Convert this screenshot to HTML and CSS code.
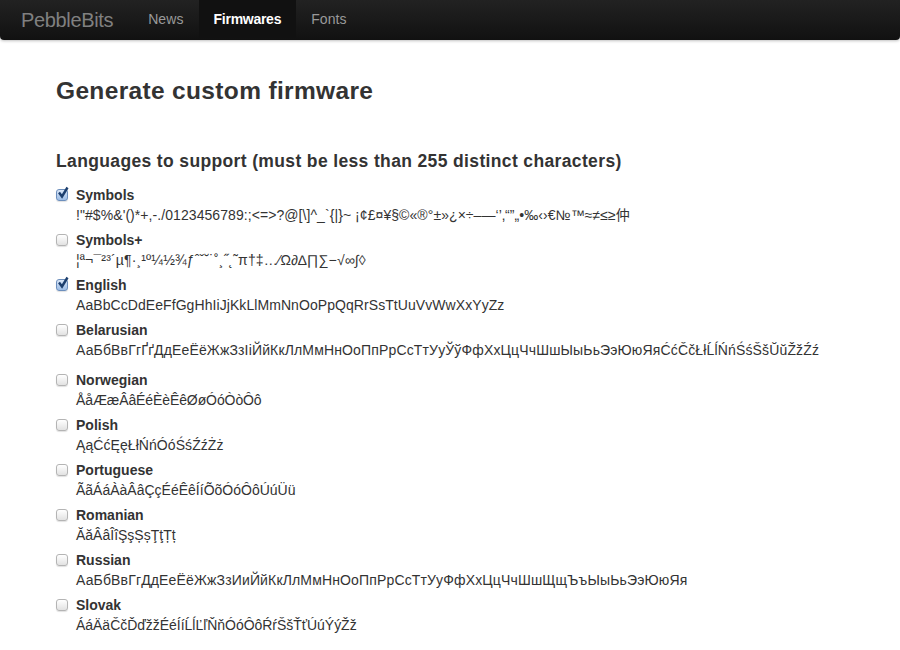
FILE: index.html
```html
<!DOCTYPE html>
<html lang="en">
<head>
    <meta charset="UTF-8">
    <meta name="viewport" content="width=device-width, initial-scale=1.0">
    <title>PebbleBits - Firmwares</title>
    <link rel="stylesheet" href="styles.css">
</head>
<body>
    <div class="navbar">
        <a class="brand" href="#">PebbleBits</a>
        <ul class="nav">
            <li><a href="#">News</a></li>
            <li class="active"><a href="#">Firmwares</a></li>
            <li><a href="#">Fonts</a></li>
        </ul>
    </div>

    <div class="container">
        <h1>Generate custom firmware</h1>
        <h3>Languages to support (must be less than 255 distinct characters)</h3>

        <div class="lang">
            <label class="check">
                <input type="checkbox" checked>
                <svg class="tick" width="14" height="14" viewBox="0 0 14 14"><path d="M3 6.5 L6 10.5 L11.5 1.5" fill="none" stroke="#1d3f6e" stroke-width="2.4"/></svg>
                Symbols
            </label>
            <p class="chars">!"#$%&amp;'()*+,-./0123456789:;&lt;=&gt;?@[\]^_`{|}~ ¡¢£¤¥§©«®°±»¿×÷–—‘’‚“”„•‰‹›€№™≈≠≤≥仲</p>
        </div>
        <div class="lang">
            <label class="check"><input type="checkbox"> Symbols+</label>
            <p class="chars wide">¦ª¬¯²³´µ¶·¸¹º¼½¾ƒˆˇ˘˙˚¸˝˛˜π†‡…⁄Ω∂∆∏∑−√∞∫◊</p>
        </div>
        <div class="lang">
            <label class="check">
                <input type="checkbox" checked>
                <svg class="tick" width="14" height="14" viewBox="0 0 14 14"><path d="M3 6.5 L6 10.5 L11.5 1.5" fill="none" stroke="#1d3f6e" stroke-width="2.4"/></svg>
                English
            </label>
            <p class="chars">AaBbCcDdEeFfGgHhIiJjKkLlMmNnOoPpQqRrSsTtUuVvWwXxYyZz</p>
        </div>
        <div class="lang tall">
            <label class="check"><input type="checkbox"> Belarusian</label>
            <p class="chars wide">АаБбВвГгҐґДдЕеЁёЖжЗзІіЙйКкЛлМмНнОоПпРрСсТтУуЎўФфХхЦцЧчШшЫыЬьЭэЮюЯяĆćČčŁłĹĺŃńŚśŠšŬŭŽžŹź</p>
        </div>
        <div class="lang">
            <label class="check"><input type="checkbox"> Norwegian</label>
            <p class="chars narrow">ÅåÆæÂâÉéÈèÊêØøÓóÒòÔô</p>
        </div>
        <div class="lang">
            <label class="check"><input type="checkbox"> Polish</label>
            <p class="chars">ĄąĆćĘęŁłŃńÓóŚśŹźŻż</p>
        </div>
        <div class="lang">
            <label class="check"><input type="checkbox"> Portuguese</label>
            <p class="chars plain">ÃãÁáÀàÂâÇçÉéÊêÍíÕõÓóÔôÚúÜü</p>
        </div>
        <div class="lang">
            <label class="check"><input type="checkbox"> Romanian</label>
            <p class="chars plain">ĂăÂâÎîŞşȘșŢţȚț</p>
        </div>
        <div class="lang">
            <label class="check"><input type="checkbox"> Russian</label>
            <p class="chars wide">АаБбВвГгДдЕеЁёЖжЗзИиЙйКкЛлМмНнОоПпРрСсТтУуФфХхЦцЧчШшЩщЪъЫыЬьЭэЮюЯя</p>
        </div>
        <div class="lang">
            <label class="check"><input type="checkbox"> Slovak</label>
            <p class="chars slim">ÁáÄäČčĎďžžÉéÍíĹĺĽľŇňÓóÔôŔŕŠšŤťÚúÝýŽž</p>
        </div>
    </div>
</body>
</html>
```

FILE: styles.css
```css
body {
    margin: 0;
    font-family: "Liberation Sans", Arial, sans-serif;
    font-size: 14px;
    line-height: 20px;
    color: #333;
    background: #fff;
    overflow: hidden;
}
.navbar {
    display: flex;
    height: 40px;
    background: linear-gradient(to bottom, #222, #111);
    border-radius: 0 0 4px 4px;
    box-shadow: 0 1px 3px rgba(0, 0, 0, 0.25);
}
.brand {
    padding: 0 20px 0 21px;
    font-size: 20px;
    line-height: 40px;
    font-weight: normal;
    color: #808080;
    text-decoration: none;
    letter-spacing: -0.35px;
}
.nav {
    display: flex;
    list-style: none;
    margin: 0;
    padding: 0;
}
.nav a {
    display: block;
    padding: 0 15px;
    line-height: 38px;
    color: #999;
    font-weight: normal;
    text-decoration: none;
    letter-spacing: 0.1px;
}
.nav .active a {
    background: #111;
    color: #fff;
    font-weight: bold;
    letter-spacing: -0.27px;
}
.container {
    padding: 0 56px;
}
h1 {
    margin: 33px 0 0;
    font-size: 24.5px;
    line-height: 36px;
    font-weight: bold;
    letter-spacing: 0.34px;
}
h3 {
    margin: 38px 0 10px;
    font-size: 17.5px;
    line-height: 28px;
    font-weight: bold;
    letter-spacing: 0.36px;
}
.lang {
    margin-bottom: 5px;
}
.lang.tall {
    margin-bottom: 10px;
}
.check {
    position: relative;
    display: flex;
    align-items: center;
    gap: 7px;
    font-weight: bold;
    height: 20px;
}
.check input {
    appearance: none;
    width: 12px;
    height: 12px;
    margin: 0 1px 0 0;
    border: 1px solid #b4b4b4;
    border-radius: 3px;
    background: linear-gradient(to bottom, #fff, #e2e2e2);
    box-shadow: 0 1px 1px rgba(0, 0, 0, 0.12);
}
.check input:checked {
    border-color: #6d8fbd;
    background: linear-gradient(to bottom, #dbe7f7, #9dbde6);
}
.tick {
    position: absolute;
    left: 0;
    top: 1px;
}
.chars {
    margin: 0 0 0 20px;
    line-height: 20px;
    white-space: nowrap;
    letter-spacing: 0.07px;
    font-family: "Liberation Sans", "DejaVu Sans", "Noto Sans CJK SC", sans-serif;
}
.chars.wide {
    letter-spacing: 0.15px;
}
.chars.narrow {
    letter-spacing: -0.1px;
}
.chars.plain {
    letter-spacing: 0;
}
.chars.slim {
    letter-spacing: -0.03px;
}
```
